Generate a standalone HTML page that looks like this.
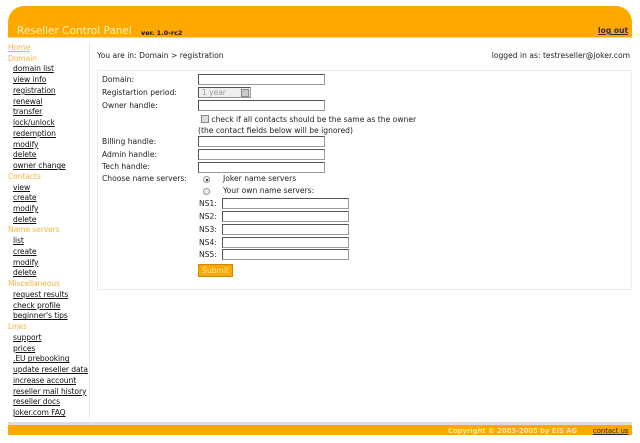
<!DOCTYPE html>
<html><head><style>
*{margin:0;padding:0;box-sizing:border-box}
body{width:640px;height:443px;background:#fff;font-family:"DejaVu Sans",Verdana,sans-serif;font-size:7.6px;color:#222;position:relative;overflow:hidden}
.hdr{position:absolute;left:8px;top:6px;width:624px;height:32px;background:#ffa800;border-radius:16px 16px 0 0;border-bottom:1px solid #ffd77a}
.title{position:absolute;left:17px;top:25px;font-size:10.5px;color:#ffefc0;font-family:"DejaVu Sans",sans-serif}
.ver{position:absolute;left:141px;top:29px;font-size:6.5px;font-weight:bold;color:#111}
.logout{position:absolute;left:598px;top:26px;font-size:7.6px;font-weight:bold;color:#3a2a4a;text-decoration:underline}
.side{position:absolute;left:8px;top:43px;width:82px;height:376px;border-right:1px solid #e6e6e6}
.side div{height:10.74px;line-height:10.74px;white-space:nowrap;letter-spacing:-0.1px}
.side .h{color:#f5b642}
.side .l{padding-left:5px;color:#111;text-decoration:underline}
.bc{position:absolute;left:97px;top:51px}
.li{position:absolute;right:10px;top:51px}
.box{position:absolute;left:97px;top:70px;width:535px;height:220px;border:1px solid #ececec}
.t{position:absolute;white-space:nowrap}
.in{position:absolute;height:11px;border:1px solid #555;border-bottom-color:#999;border-right-color:#999;background:#fff}
.foot{position:absolute;left:8px;top:422px;width:624px;height:13px;background:#ffa800;border-top:3px solid #ddd}
.copy{position:absolute;left:448px;top:427px;font-size:6.8px;font-weight:bold;color:#ffe6a0}
.cu{position:absolute;left:593px;top:427px;font-size:6.8px;color:#222;text-decoration:underline}
.rad{position:absolute;width:7px;height:7px;border-radius:50%;border:1px solid #999;background:#eee}
</style></head><body>
<div class="hdr"></div>
<div class="title">Reseller Control Panel</div>
<div class="ver">ver. 1.0-rc2</div>
<div class="logout">log out</div>
<div class="side">
<div class="h" style="text-decoration:underline">Home</div><div class="h">Domain</div>
<div class="l">domain list</div><div class="l">view info</div><div class="l">registration</div><div class="l">renewal</div><div class="l">transfer</div><div class="l">lock/unlock</div><div class="l">redemption</div><div class="l">modify</div><div class="l">delete</div><div class="l">owner change</div>
<div class="h">Contacts</div><div class="l">view</div><div class="l">create</div><div class="l">modify</div><div class="l">delete</div>
<div class="h">Name servers</div><div class="l">list</div><div class="l">create</div><div class="l">modify</div><div class="l">delete</div>
<div class="h">Miscellaneous</div><div class="l">request results</div><div class="l">check profile</div><div class="l">beginner's tips</div>
<div class="h">Links</div><div class="l">support</div><div class="l">prices</div><div class="l">.EU prebooking</div><div class="l">update reseller data</div><div class="l">increase account</div><div class="l">reseller mail history</div><div class="l">reseller docs</div><div class="l">Joker.com FAQ</div>
</div>
<div class="bc">You are in: Domain &gt; registration</div>
<div class="li">logged in as: testreseller@joker.com</div>
<div class="box"></div>
<div class="t" style="left:102px;top:75px">Domain:</div><div class="in" style="left:198px;top:74px;width:127px"></div>
<div class="t" style="left:102px;top:88px">Registartion period:</div>
<div class="in" style="left:198px;top:87px;width:53px;background:#eee;color:#999;padding-left:3px;line-height:9px;font-size:7.5px">1 year<span style="position:absolute;right:1px;top:1px;width:8px;height:8px;background:#ccc;border:1px solid #888"></span></div>
<div class="t" style="left:102px;top:101px">Owner handle:</div><div class="in" style="left:198px;top:100px;width:127px"></div>
<div class="t" style="left:201px;top:115px"><span style="display:inline-block;width:8px;height:8px;border:1px solid #888;background:#ddd;vertical-align:-1px"></span> check if all contacts should be the same as the owner</div>
<div class="t" style="left:198px;top:126px">(the contact fields below will be ignored)</div>
<div class="t" style="left:102px;top:137px">Billing handle:</div><div class="in" style="left:198px;top:136px;width:127px"></div>
<div class="t" style="left:102px;top:150px">Admin handle:</div><div class="in" style="left:198px;top:149px;width:127px"></div>
<div class="t" style="left:102px;top:162px">Tech handle:</div><div class="in" style="left:198px;top:162px;width:127px"></div>
<div class="t" style="left:102px;top:174px">Choose name servers:</div>
<div class="rad" style="left:203px;top:176px"><span style="position:absolute;left:1.5px;top:1.5px;width:2px;height:2px;background:#000;border-radius:50%"></span></div>
<div class="t" style="left:223px;top:174px">Joker name servers</div>
<div class="rad" style="left:203px;top:188px"></div>
<div class="t" style="left:223px;top:186px">Your own name servers:</div>
<div class="t" style="left:199px;top:199px">NS1:</div><div class="in" style="left:222px;top:198px;width:127px"></div>
<div class="t" style="left:199px;top:212px">NS2:</div><div class="in" style="left:222px;top:211px;width:127px"></div>
<div class="t" style="left:199px;top:225px">NS3:</div><div class="in" style="left:222px;top:224px;width:127px"></div>
<div class="t" style="left:199px;top:238px">NS4:</div><div class="in" style="left:222px;top:237px;width:127px"></div>
<div class="t" style="left:199px;top:250px">NS5:</div><div class="in" style="left:222px;top:249px;width:127px"></div>
<div class="t" style="left:198px;top:264px;width:35px;height:13px;background:#ffa800;border:1px solid #c80;color:#ffe6a0;text-align:center;line-height:11px">Submit</div>
<div class="foot"></div>
<div class="copy">Copyright © 2003-2005 by EIS AG</div>
<div class="cu">contact us</div>
</body></html>
